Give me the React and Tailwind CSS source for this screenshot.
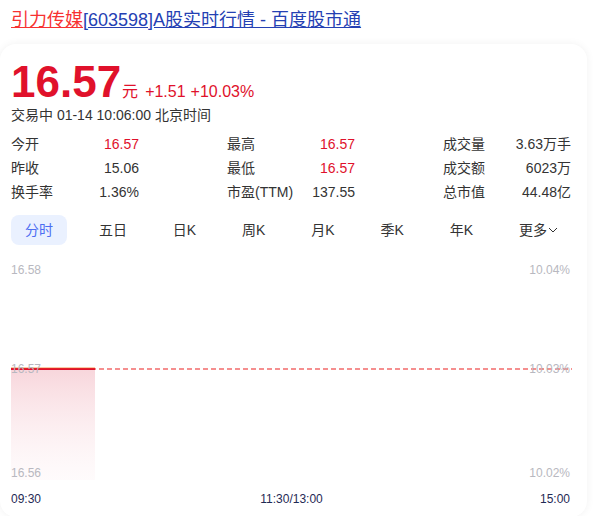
import React from "react";

const stats = [
  [
    { label: "今开", value: "16.57", red: true },
    { label: "最高", value: "16.57", red: true },
    { label: "成交量", value: "3.63万手" },
  ],
  [
    { label: "昨收", value: "15.06" },
    { label: "最低", value: "16.57", red: true },
    { label: "成交额", value: "6023万" },
  ],
  [
    { label: "换手率", value: "1.36%" },
    { label: "市盈(TTM)", value: "137.55" },
    { label: "总市值", value: "44.48亿" },
  ],
];

const tabs = ["分时", "五日", "日K", "周K", "月K", "季K", "年K"];

const Chart = () => (
  <div className="relative mt-[17px] h-[222px] w-[561px]">
    <svg className="absolute inset-0" width="561" height="222" viewBox="0 0 561 222">
      <defs>
        <linearGradient id="fill" x1="0" y1="0" x2="0" y2="1">
          <stop offset="0%" stopColor="#f7d2d8" stopOpacity="0.9" />
          <stop offset="100%" stopColor="#fdf2f4" stopOpacity="0.3" />
        </linearGradient>
      </defs>
      <rect x="0" y="108" width="84" height="110" fill="url(#fill)" />
      <path d="M0 107 H561" stroke="#f26b6b" strokeWidth="1.4" strokeDasharray="5 3" />
      <line x1="0" y1="107" x2="84" y2="107" stroke="#e0102a" strokeWidth="2" />
      <line x1="0" y1="105.8" x2="84" y2="105.8" stroke="#f57c2a" strokeWidth="0.6" />
    </svg>
    <span className="absolute left-0 top-[2px] text-[12px] leading-none text-[#b8b8c0]">16.58</span>
    <span className="absolute left-0 top-[101px] text-[12px] leading-none text-[#b8b8c0]">16.57</span>
    <span className="absolute left-0 top-[205px] text-[12px] leading-none text-[#b8b8c0]">16.56</span>
    <span className="absolute right-[2px] top-[2px] text-[12px] leading-none text-[#b8b8c0]">10.04%</span>
    <span className="absolute right-[2px] top-[101px] text-[12px] leading-none text-[#b8b8c0]">10.03%</span>
    <span className="absolute right-[2px] top-[205px] text-[12px] leading-none text-[#b8b8c0]">10.02%</span>
  </div>
);

const App = () => {
  return (
    <div
      className="min-h-screen bg-white text-[#333]"
      style={{ fontFamily: '"Liberation Sans", "Noto Sans CJK SC", sans-serif' }}
    >
      <div className="px-[11px] pt-[9px] text-[18px] leading-[22px]">
        <a className="text-[#f73131] underline">引力传媒</a>
        <a className="text-[#2440b3] underline">[603598]A股实时行情 - 百度股市通</a>
      </div>

      <div className="mt-[13px] w-[587px] rounded-2xl bg-white pl-[11px] pr-[15px] pt-[16px] pb-[10px] shadow-[0_0_8px_rgba(0,0,0,0.06)]">
        <div className="flex items-baseline leading-none text-[#e0112b]">
          <span className="text-[44px] font-bold leading-none">16.57</span>
          <span className="ml-[1px] text-[16px]">元</span>
          <span className="ml-[7px] text-[16px]">+1.51</span>
          <span className="ml-[5px] text-[16px]">+10.03%</span>
        </div>
        <div className="mt-[1px] text-[14px] leading-[20px] text-[#333]">
          交易中 01-14 10:06:00 北京时间
        </div>

        <div className="mt-[7px] w-[561px]">
          {stats.map((row, i) => (
            <div key={i} className="grid grid-cols-3 gap-x-[87px] text-[14px] leading-[24px]">
              {row.map((s) => (
                <div key={s.label} className="flex justify-between pr-[1px]">
                  <span className="text-[#333]">{s.label}</span>
                  <span className={s.red ? "text-[#e0112b]" : "text-[#333]"}>{s.value}</span>
                </div>
              ))}
            </div>
          ))}
        </div>

        <div className="mt-[11px] flex w-[561px] items-center justify-between text-[14px]">
          {tabs.map((t, i) => (
            <div
              key={t}
              className={
                i === 0
                  ? "flex h-[30px] items-center rounded-lg bg-[#eaf1ff] px-[14px] text-[#4e6ef2]"
                  : "flex h-[30px] items-center px-[14px] text-[#333]"
              }
            >
              {t}
            </div>
          ))}
          <div className="flex h-[30px] items-center px-[14px] text-[#333]">
            更多
            <svg width="10" height="8" viewBox="0 0 10 8" className="ml-[1px]">
              <path d="M1 2 L5 6 L9 2" fill="none" stroke="#333" strokeWidth="1" />
            </svg>
          </div>
        </div>

        <Chart />

        <div className="relative mt-[9px] h-[14px] w-[561px] text-[12px] leading-none text-[#1f2a55]">
          <span className="absolute left-0 top-0">09:30</span>
          <span className="absolute left-1/2 top-0 -translate-x-1/2">11:30/13:00</span>
          <span className="absolute right-[2px] top-0">15:00</span>
        </div>
      </div>
    </div>
  );
};

export default App;
